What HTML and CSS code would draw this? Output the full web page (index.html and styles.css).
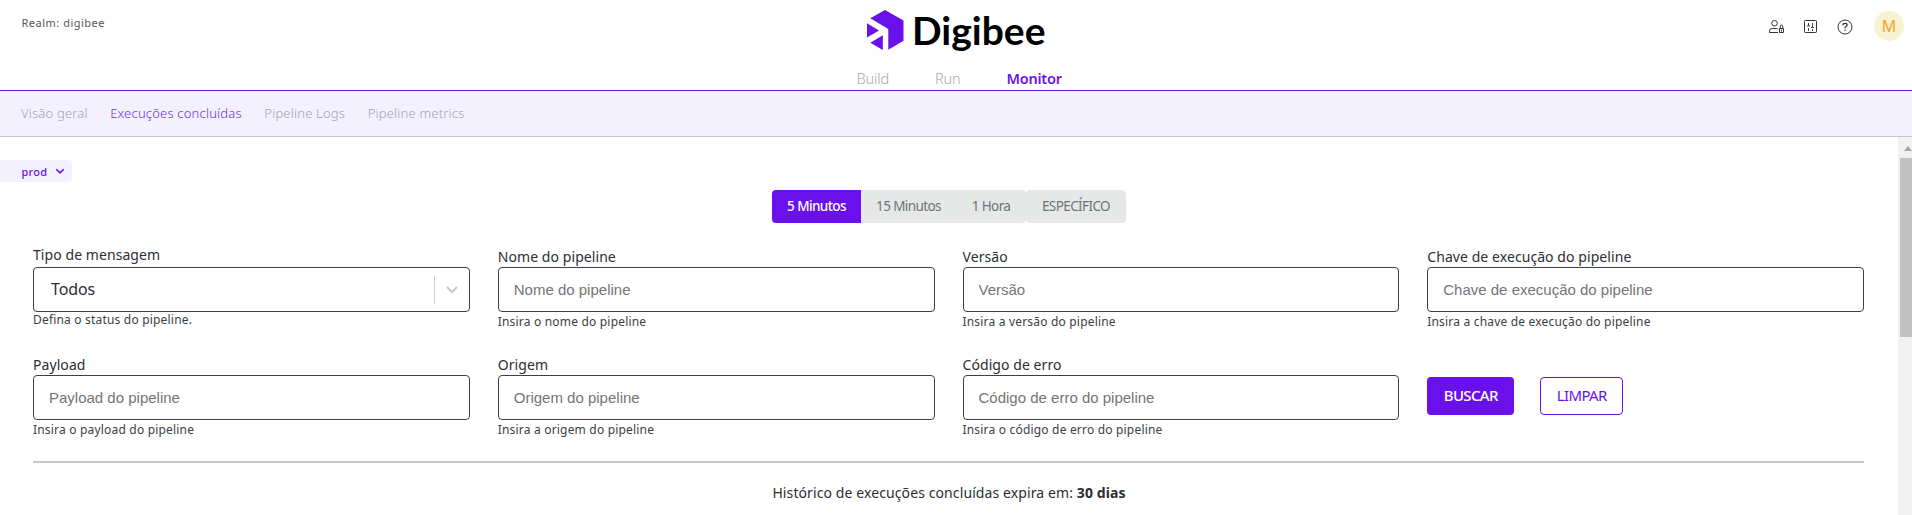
FILE: index.html
```html
<!DOCTYPE html>
<html lang="pt-BR">
<head>
<meta charset="utf-8">
<title>Digibee</title>
<link rel="stylesheet" href="styles.css">
</head>
<body>
<header class="header">
  <div class="realm">Realm: digibee</div>
  <div class="brand">
    <svg class="logo" width="180" height="56" viewBox="0 0 180 56" role="img" aria-label="Digibee">
      <g fill="#6a11eb">
        <path d="M19 10 37.500 20.400V40.700L22.300 49.700V29L4.300 18.200Z"/>
        <path d="M1 23.300 13 30.600 1 37.600Z"/>
        <path d="M16.800 35.300V49.900L4.300 42.800Z"/>
      </g>
      <text class="wordmark" x="46" y="44.500" textLength="133.500" lengthAdjust="spacingAndGlyphs">Digibee</text>
    </svg>
    <nav class="mainnav">
      <a class="mainnav-item">Build</a>
      <a class="mainnav-item">Run</a>
      <a class="mainnav-item active">Monitor</a>
    </nav>
  </div>
  <div class="tools">
    <svg class="tool-user" width="16" height="16" viewBox="0 0 16 16" fill="none" stroke="#333">
      <circle cx="5.500" cy="4.300" r="2.800"/>
      <path d="M9 13.500H.5v-1.600q0-2.400 2.600-2.400h4.400q1 0 1.700.5"/>
      <path d="M10.500 9.500h4v4h-4zM11.300 9.500V7.200q0-1.200 1.200-1.200t1.200 1.200v2.300M12.500 10.500v2"/>
    </svg>
    <svg class="tool-sliders" width="16" height="16" viewBox="0 0 16 16" fill="none" stroke="#333">
      <rect x="1.500" y="1.500" width="12" height="12" rx=".8"/>
      <path d="M5.500 4v3M5.500 9v3M9.500 4v4M9.500 10v2M4 7h3M8 8.500h3" stroke-width=".9"/>
    </svg>
    <svg class="tool-help" width="16" height="16" viewBox="0 0 16 16" fill="none" stroke="#333">
      <circle cx="8" cy="8" r="7"/>
      <path d="M5.900 6.300q0-2 2.100-2t2.100 1.800q0 1-1.200 1.600-.9.500-.9 1.500M8 10.500v1.300" stroke-width="1.200"/>
    </svg>
    <div class="avatar">M</div>
  </div>
</header>
<nav class="subnav">
  <a class="subnav-item">Visão geral</a>
  <a class="subnav-item current">Execuções concluídas</a>
  <a class="subnav-item">Pipeline Logs</a>
  <a class="subnav-item">Pipeline metrics</a>
</nav>
<div class="viewport">
  <main class="content">
    <button class="env">prod
      <svg width="10" height="7" viewBox="0 0 10 7" fill="none" stroke="#6a11eb" stroke-width="1.600"><path d="M1.200 1.200 5 4.900 8.800 1.200"/></svg>
    </button>
    <div class="periods">
      <button class="period selected p1">5 Minutos</button>
      <button class="period p2">15 Minutos</button>
      <button class="period p3">1 Hora</button>
      <button class="period p4">ESPECÍFICO</button>
    </div>
    <form class="filters">
      <div class="field field-select">
        <label class="label">Tipo de mensagem</label>
        <div class="box select">
          <span class="select-value">Todos</span>
          <span class="select-arrow"><svg width="12" height="8" viewBox="0 0 12 8" fill="none" stroke="#c8c8c8" stroke-width="2" stroke-linecap="round"><path d="M1.500 1.500 6 6 10.500 1.500"/></svg></span>
        </div>
        <div class="hint">Defina o status do pipeline.</div>
      </div>
      <div class="field">
        <label class="label">Nome do pipeline</label>
        <input class="box" placeholder="Nome do pipeline">
        <div class="hint">Insira o nome do pipeline</div>
      </div>
      <div class="field">
        <label class="label">Versão</label>
        <input class="box" placeholder="Versão">
        <div class="hint">Insira a versão do pipeline</div>
      </div>
      <div class="field">
        <label class="label">Chave de execução do pipeline</label>
        <input class="box" placeholder="Chave de execução do pipeline">
        <div class="hint">Insira a chave de execução do pipeline</div>
      </div>
      <div class="field">
        <label class="label">Payload</label>
        <input class="box" placeholder="Payload do pipeline">
        <div class="hint">Insira o payload do pipeline</div>
      </div>
      <div class="field">
        <label class="label">Origem</label>
        <input class="box" placeholder="Origem do pipeline">
        <div class="hint">Insira a origem do pipeline</div>
      </div>
      <div class="field">
        <label class="label">Código de erro</label>
        <input class="box" placeholder="Código de erro do pipeline">
        <div class="hint">Insira o código de erro do pipeline</div>
      </div>
      <div class="actions">
        <button type="button" class="btn btn-primary">BUSCAR</button>
        <button type="button" class="btn btn-outline">LIMPAR</button>
      </div>
    </form>
    <hr class="rule">
    <p class="expiry">Histórico de execuções concluídas expira em: <b>30 dias</b></p>
  </main>
  <div class="scrollbar">
    <svg class="scroll-up" width="8" height="5" viewBox="0 0 8 5" fill="#a3a3a3"><path d="M4 0 8 5H0Z"/></svg>
    <div class="scroll-thumb"></div>
  </div>
</div>
</body>
</html>
```
FILE: styles.css
```css
* { box-sizing: border-box; }
body {
  margin: 0;
  height: 515px;
  overflow: hidden;
  background: #fff;
  color: #2b2e33;
  font-family: "Noto Sans", sans-serif;
  display: flex;
  flex-direction: column;
}
button, input { font: inherit; margin: 0; border: 0; padding: 0; }

.header {
  height: 91px;
  flex: none;
  border-bottom: 1px solid #6a11eb;
  display: grid;
  grid-template-columns: 1fr 240px 1fr;
}
.realm {
  padding: 15px 0 0 21.5px;
  font-size: 11px;
  line-height: 16px;
  letter-spacing: .5px;
  color: #555;
}
.brand { display: flex; flex-direction: column; align-items: center; }
.logo { display: block; flex: none; width: 180px; }
.wordmark { font: 700 39px Lato, sans-serif; fill: #000; }
.mainnav {
  display: flex;
  gap: 46px;
  width: 199px;
  margin-top: 12px;
  font-size: 14.5px;
  line-height: 20px;
  letter-spacing: -.25px;
  color: #a8a8a8;
  white-space: nowrap;
}
.mainnav-item { font-weight: 300; letter-spacing: -.15px; }
.mainnav-item.active { color: #6a11eb; font-weight: 600; letter-spacing: -.25px; }
.tools { display: flex; justify-content: flex-end; padding: 11px 8px 0 0; }
.tool-user { margin: 8px 18px 0 0; }
.tool-sliders { margin: 8px 18px 0 0; }
.tool-help { margin: 8px 21px 0 0; }
.avatar {
  width: 30px;
  height: 30px;
  border-radius: 50%;
  background: #f9f2d0;
  color: #e9a92f;
  font: 16px/31px "Noto Sans", sans-serif;
  text-align: center;
}

.subnav {
  height: 46px;
  flex: none;
  background: #f3f1ff;
  border-bottom: 1px solid #c4c4cc;
  display: flex;
  gap: 22.5px;
  padding: 12px 21px 0;
  font-size: 13px;
  font-weight: 300;
  line-height: 20px;
  letter-spacing: .2px;
  color: #a3a1b0;
}
.subnav-item.current { color: #6a2fe6; }

.viewport { flex: 1; display: flex; min-height: 0; }
.content { flex: 1; display: flex; flex-direction: column; overflow: hidden; }
.env {
  align-self: flex-start;
  margin-top: 23px;
  width: 72px;
  height: 22px;
  padding: 0 7px 0 21.5px;
  display: flex;
  align-items: center;
  justify-content: space-between;
  background: #f3f1ff;
  border-radius: 0 4px 4px 0;
  color: #6a11eb;
  font-size: 11px;
  font-weight: 500;
  letter-spacing: .3px;
}
.periods { align-self: center; display: flex; margin-top: 8px; }
.period {
  height: 33px;
  background: #e6e8e8;
  color: #6f7374;
  font-size: 13.5px;
  line-height: 30px;
  padding-bottom: 2px;
  letter-spacing: -.6px;
  white-space: nowrap;
}
.period.selected { background: #6a11eb; color: #fff; font-weight: 500; border-radius: 4px 0 0 4px; }
.p1 { width: 89px; }
.p2 { width: 95px; }
.p3 { width: 70px; border-radius: 0 4px 4px 0; }
.p4 { width: 100px; border-radius: 4px; }

.filters {
  margin: 23px 34px 0 33px;
  display: grid;
  grid-template-columns: repeat(4, 1fr);
  column-gap: 28px;
  row-gap: 24px;
}
.field { height: 84px; }
.label { display: block; height: 21px; padding-top: 1px; font-size: 14px; line-height: 20px; letter-spacing: .07px; }
.field-select .label { padding-top: 0; line-height: 18px; }
.box {
  display: block;
  width: 100%;
  height: 45px;
  border: 1px solid #3c4043;
  border-radius: 4px;
  background: #fff;
}
input.box { padding: 0 15px; font: 15px "Liberation Sans", Arial, sans-serif; }
input.box::placeholder { color: #757575; opacity: 1; }
.select { display: flex; align-items: center; padding-left: 17px; font-size: 16px; }
.select-value { flex: 1; padding-bottom: 2px; letter-spacing: -.1px; }
.select-arrow {
  height: 28px;
  width: 35px;
  border-left: 1px solid #ccc;
  display: flex;
  align-items: center;
  justify-content: center;
}
.hint { padding-top: 2px; font-size: 12px; line-height: 16px; letter-spacing: .19px; color: #3c4043; white-space: nowrap; }
.field-select .hint { padding-top: 0; }
.actions { display: flex; align-items: flex-start; gap: 26px; padding-top: 23px; }
.btn { height: 38px; border-radius: 4px; font-size: 15px; line-height: 34px; padding-bottom: 2px; letter-spacing: -.65px; }
.btn-primary { width: 87px; background: #6a11eb; color: #fff; font-weight: 500; }
.btn-outline { width: 83px; background: #fff; color: #6a11eb; border: 1px solid #6a11eb; }
.rule {
  align-self: stretch;
  margin: 23px 34px 0 33px;
  height: 2px;
  border: 0;
  background: #c4c8cc;
}
.expiry { margin: 20px 0 0; text-align: center; font-size: 14px; line-height: 20px; letter-spacing: .1px; color: #2b2e33; }

.scrollbar {
  width: 14px;
  flex: none;
  background: #f1f1f1;
  padding-left: 2px;
  display: flex;
  flex-direction: column;
}
.scroll-up { margin: 9px 0 7px 4px; flex: none; }
.scroll-thumb { height: 179px; background: #c1c1c1; }
```
